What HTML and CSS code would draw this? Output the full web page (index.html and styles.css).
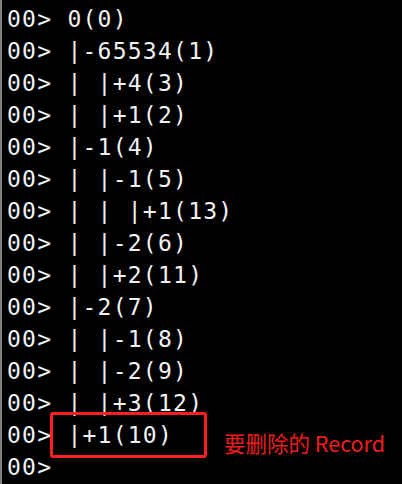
FILE: index.html
```html
<!DOCTYPE html>
<html lang="zh">
<head>
<meta charset="utf-8">
<link rel="stylesheet" href="styles.css">
</head>
<body>
<div class="console">
<div class="line">00&gt; 0(0)</div>
<div class="line">00&gt; |-65534(1)</div>
<div class="line">00&gt; | |+4(3)</div>
<div class="line">00&gt; | |+1(2)</div>
<div class="line">00&gt; |-1(4)</div>
<div class="line">00&gt; | |-1(5)</div>
<div class="line">00&gt; | | |+1(13)</div>
<div class="line">00&gt; | |-2(6)</div>
<div class="line">00&gt; | |+2(11)</div>
<div class="line">00&gt; |-2(7)</div>
<div class="line">00&gt; | |-1(8)</div>
<div class="line">00&gt; | |-2(9)</div>
<div class="line">00&gt; | |+3(12)</div>
<div class="line">00&gt; |+1(10)</div>
<div class="line">00&gt;</div>
<div class="mark"></div>
<div class="note">要删除的 Record</div>
</div>
</body>
</html>
```
FILE: styles.css
```css
html, body {
  margin: 0;
  padding: 0;
  background: #000;
  width: 402px;
  height: 484px;
  overflow: hidden;
}
.console {
  position: relative;
  height: 484px;
  box-sizing: border-box;
  border-left: 2px solid #808080;
  padding: 3px 0 0 5px;
  font-family: "DejaVu Sans Mono", monospace;
  font-size: 23px;
  letter-spacing: 1.25px;
  line-height: 32px;
  color: #f2f2f2;
}
.line {
  height: 32px;
  white-space: pre;
}
.mark {
  position: absolute;
  left: 48px;
  top: 412px;
  width: 157px;
  height: 46px;
  box-sizing: border-box;
  border: 3px solid #ff1f1f;
  border-radius: 3px;
}
.note {
  position: absolute;
  left: 222px;
  top: 428px;
  font-family: "Noto Sans CJK SC", "Noto Sans", sans-serif;
  font-size: 21.5px;
  line-height: 30px;
  letter-spacing: 0;
  color: #f01d1d;
  white-space: nowrap;
}
```
